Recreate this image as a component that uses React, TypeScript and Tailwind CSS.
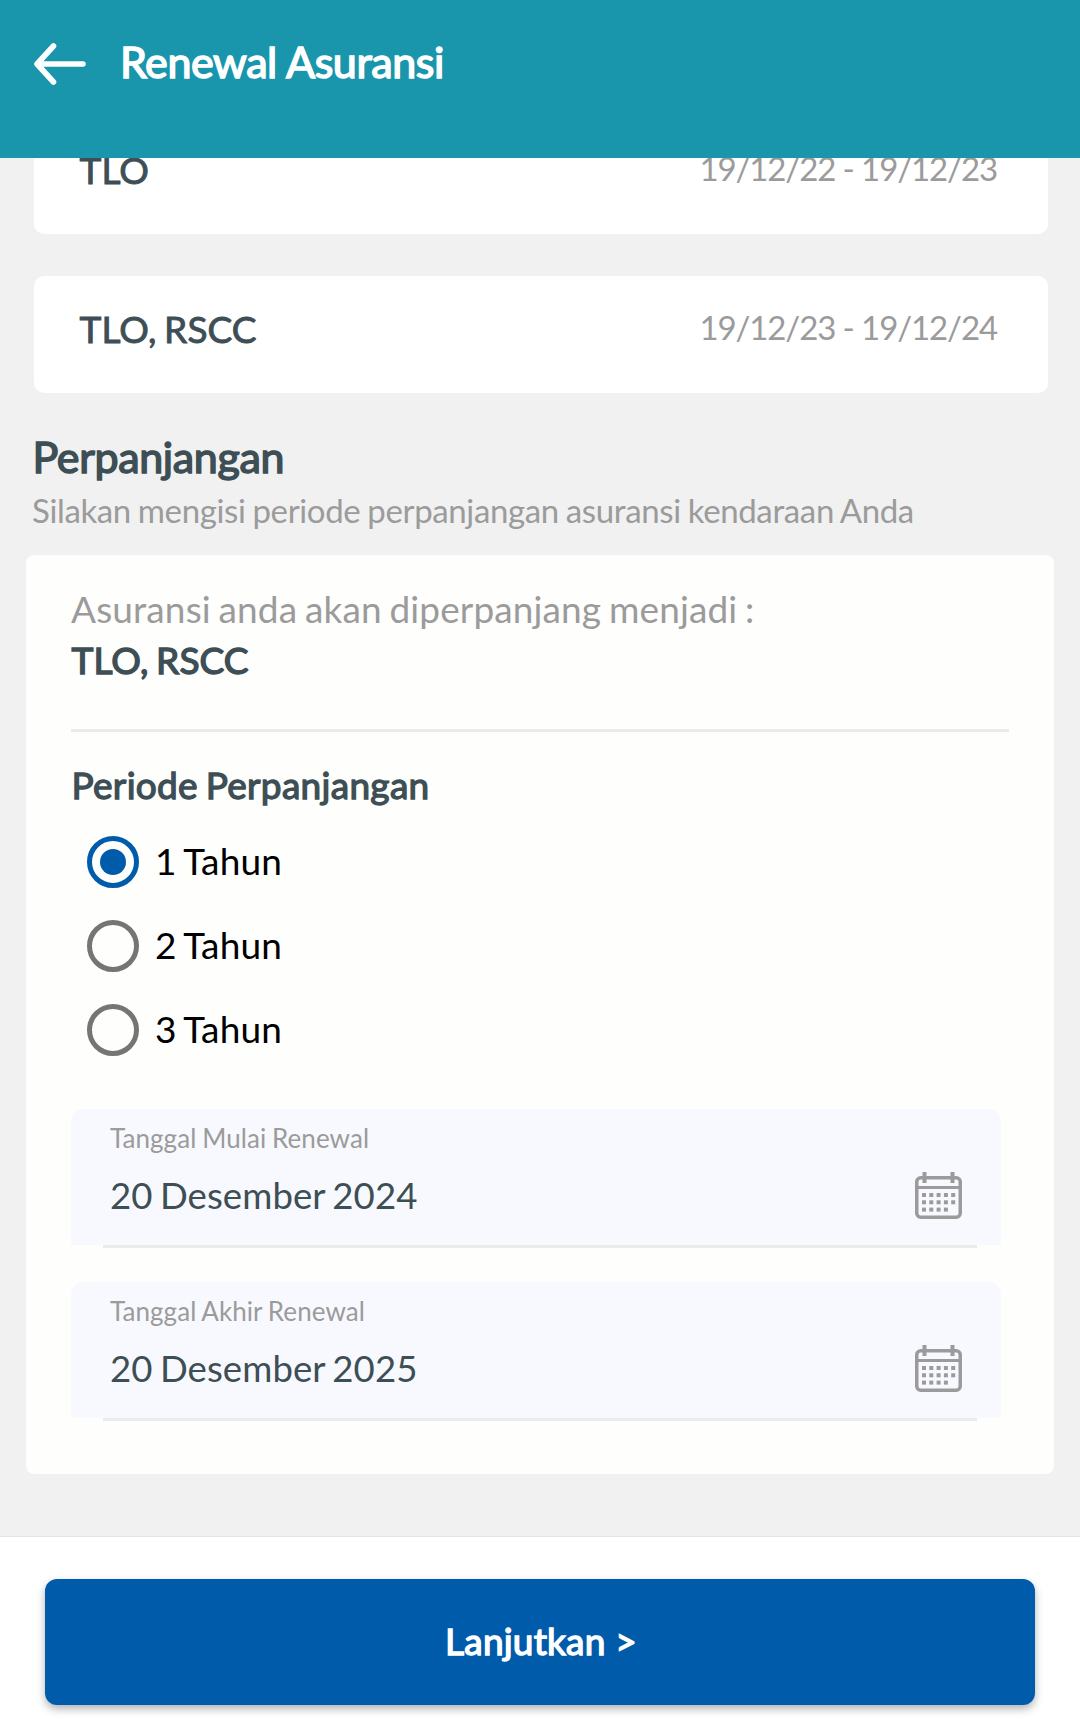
import React from "react";

function BackArrow() {
  return (
    <svg className="mt-1 ml-[34px] h-[44px] w-[52px] shrink-0" viewBox="0 0 52 44" fill="none" stroke="white" strokeWidth="5.6" strokeLinecap="round" strokeLinejoin="round">
      <path d="M49 22H4M19.5 4L3 22L19.5 40" />
    </svg>
  );
}

function CalendarIcon() {
  const dots: [number, number][] = [];
  for (let row = 0; row < 3; row++)
    for (let col = 0; col < (row === 2 ? 4 : 5); col++) dots.push([7 + col * 7.3, 21 + row * 7.3]);
  return (
    <svg className="mt-[63px] h-[47px] w-[47px] shrink-0" viewBox="0 0 47 47" fill="none" stroke="#9b9b9b">
      <rect x="1.75" y="5.75" width="43.5" height="39.5" rx="4" strokeWidth="3.5" />
      <path d="M2 15.5H45" strokeWidth="3.2" />
      <path d="M9.5 0V11M37.5 0V11" strokeWidth="4" />
      {dots.map(([x, y]) => (
        <rect key={`${x}-${y}`} x={x} y={y} width="4" height="4" fill="#9b9b9b" stroke="none" />
      ))}
    </svg>
  );
}

function HistoryCard({ title, period }: { title: string; period: string }) {
  return (
    <div className="flex h-[117px] justify-between rounded-[10px] bg-white pr-[51px] pl-[45.5px]">
      <span className="mt-[33px] text-[37px] leading-[40px] tracking-[0.1px] text-[#3d4e55] [-webkit-text-stroke:0.9px] [word-spacing:-2px]">{title}</span>
      <span className="mt-[31px] text-[33px] leading-[40px] tracking-[-1.1px] text-[#9b9b9b]">{period}</span>
    </div>
  );
}

function PeriodOption({ label, checked }: { label: string; checked?: boolean }) {
  return (
    <label className="flex h-[84px] items-center pl-[16px]">
      {checked ? (
        <span className="flex size-[52px] items-center justify-center rounded-full border-[5px] border-[#005bab]">
          <span className="size-[26px] rounded-full bg-[#005bab]" />
        </span>
      ) : (
        <span className="size-[52px] rounded-full border-[5px] border-[#757575]" />
      )}
      <span className="-mt-[2px] ml-[16px] text-[37px] leading-[40px] tracking-[0.2px] text-black [word-spacing:-2px]">{label}</span>
    </label>
  );
}

function DateField({ label, value }: { label: string; value: string }) {
  return (
    <div className="w-[930px]">
      <div className="flex h-[136px] justify-between rounded-t-[12px] bg-[#f8f9fe] pr-[39px] pl-[39px]">
        <div className="flex flex-col">
          <span className="mt-[14px] text-[26px] leading-[31px] tracking-[0.08px] text-[#9b9b9b] [word-spacing:-1px]">{label}</span>
          <span className="mt-[21px] text-[36.6px] leading-[40px] tracking-[0.06px] text-[#3d4e55] [word-spacing:-2px]">{value}</span>
        </div>
        <CalendarIcon />
      </div>
      <div className="mr-[24px] ml-[32px] h-[3px] bg-[#ebebeb]" />
    </div>
  );
}

export default function App() {
  return (
    <div className="flex h-[1731px] w-[1080px] flex-col overflow-hidden bg-[#f1f1f1] font-['Lato',sans-serif]">
      <header className="z-10 flex h-[158px] shrink-0 items-center bg-[#1996ac] pb-[34px]">
        <BackArrow />
        <h1 className="ml-[34px] text-[43px] leading-[52px] tracking-[-0.42px] text-white [-webkit-text-stroke:1.5px]">Renewal Asuransi</h1>
      </header>

      <main className="-mt-[41px] flex flex-1 flex-col">
        <div className="mr-[32px] ml-[34px] flex flex-col gap-[42px]">
          <HistoryCard title="TLO" period="19/12/22 - 19/12/23" />
          <HistoryCard title="TLO, RSCC" period="19/12/23 - 19/12/24" />
        </div>

        <h2 className="mt-[38px] ml-[32.5px] text-[43px] leading-[52px] tracking-[-0.36px] text-[#3d4e55] [-webkit-text-stroke:1.5px]">Perpanjangan</h2>
        <p className="mt-[7px] ml-[32px] text-[33px] leading-[40px] tracking-[-0.36px] text-[#9b9b9b] [word-spacing:-1.2px]">Silakan mengisi periode perpanjangan asuransi kendaraan Anda</p>

        <section className="mt-[25px] mr-[26px] ml-[26px] h-[919px] rounded-[8px] bg-[#fefefd] px-[45px]">
          <div className="flex h-[174px] flex-col">
            <p className="mt-[34px] text-[37px] leading-[40px] tracking-[0.12px] text-[#9b9b9b] [word-spacing:-1.8px]">Asuransi anda akan diperpanjang menjadi :</p>
            <p className="mt-[11px] ml-[0.5px] text-[37px] leading-[40px] tracking-[0.1px] text-[#3d4e55] [-webkit-text-stroke:1.4px] [word-spacing:-2px]">TLO, RSCC</p>
          </div>
          <div className="h-[3px] bg-[#ebebeb]" />
          <h3 className="mt-[33px] ml-[0.5px] text-[37px] leading-[40px] tracking-[0.3px] text-[#3d4e55] [-webkit-text-stroke:1.3px] [word-spacing:-2px]">Periode Perpanjangan</h3>
          <div className="mt-[15px]">
            <PeriodOption label="1 Tahun" checked />
            <PeriodOption label="2 Tahun" />
            <PeriodOption label="3 Tahun" />
          </div>
          <div className="mt-[37px] flex flex-col gap-[34px]">
            <DateField label="Tanggal Mulai Renewal" value="20 Desember 2024" />
            <DateField label="Tanggal Akhir Renewal" value="20 Desember 2025" />
          </div>
        </section>
      </main>

      <footer className="h-[195px] shrink-0 border-t border-[#e4e4e4] bg-white px-[45px] pt-[42px]">
        <button className="flex h-[126px] w-full items-center justify-center rounded-[12px] bg-[#005bab] pb-[3px] pl-[2px] text-[37px] leading-[40px] tracking-[0.2px] text-white shadow-[0_4px_8px_rgba(0,0,0,0.3)] [-webkit-text-stroke:1.4px]">
          Lanjutkan &gt;
        </button>
      </footer>
    </div>
  );
}
